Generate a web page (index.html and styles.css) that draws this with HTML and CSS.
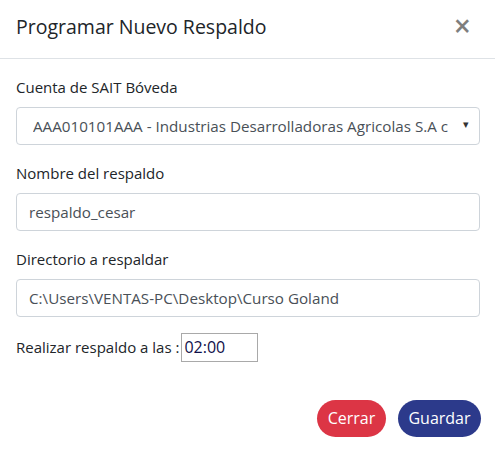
FILE: index.html
```html
<!DOCTYPE html>
<html lang="es">
<head>
<meta charset="utf-8">
<link rel="stylesheet" href="styles.css">
</head>
<body>
<div class="modal">
  <div class="modal-header">
    <h5 class="modal-title">Programar Nuevo Respaldo</h5>
    <span class="close">&times;</span>
  </div>
  <div class="modal-body">
    <div class="form-group">
      <label class="label">Cuenta de SAIT Bóveda</label>
      <div class="select">
        <span class="select-text">AAA010101AAA - Industrias Desarrolladoras Agricolas S.A c</span>
        <span class="caret">&#9662;</span>
      </div>
    </div>
    <div class="form-group">
      <label class="label">Nombre del respaldo</label>
      <div class="control">respaldo_cesar</div>
    </div>
    <div class="form-group">
      <label class="label">Directorio a respaldar</label>
      <div class="control">C:\Users\VENTAS-PC\Desktop\Curso Goland</div>
    </div>
    <div class="time-row">
      <span class="label-inline">Realizar respaldo a las :</span><span class="time">02:00</span>
    </div>
  </div>
  <div class="modal-footer">
    <button class="btn btn-red">Cerrar</button>
    <button class="btn btn-blue">Guardar</button>
  </div>
</div>
</body>
</html>
```
FILE: styles.css
```css
* { box-sizing: border-box; }
html, body { margin: 0; padding: 0; background: #fff; }
body {
  font-family: "Open Sans", "Noto Sans", sans-serif;
  color: #212529;
  font-size: 16px;
  line-height: 1.5;
  width: 495px;
  height: 450px;
  overflow: hidden;
}
.modal { width: 495px; }
.modal-header {
  display: flex;
  justify-content: space-between;
  align-items: center;
  padding: 12px 16px 17px 16px;
  border-bottom: 1px solid #dee2e6;
  height: 59px;
}
.modal-title {
  margin: 0;
  font-size: 19.5px;
  font-weight: 500;
  line-height: 1.2;
  color: #212529;
}
.close {
  font-size: 30px;
  font-weight: 600;
  color: #000;
  opacity: .5;
  line-height: 1;
  margin-right: 8px;
  margin-top: -2px;
}
.modal-body { padding: 16px 15px 16px 16px; }
.form-group { margin-bottom: 16px; }
.label {
  display: block;
  margin-bottom: 8px;
  font-size: 15px;
  line-height: 24px;
}
.select, .control {
  height: 38px;
  border: 1px solid #ced4da;
  border-radius: 4px;
  color: #495057;
  font-size: 15.2px;
  line-height: 36px;
  white-space: nowrap;
  overflow: hidden;
}
.control { padding: 0 12px; }
.select {
  display: flex;
  align-items: center;
  padding: 0 10px 0 16px;
}
.select-text {
  flex: 1;
  overflow: hidden;
  white-space: nowrap;
  margin-right: 14px;
}
.caret { font-size: 11px; color: #333; line-height: 1; margin-top: -6px; }
.time-row {
  display: flex;
  align-items: center;
  font-size: 15px;
  height: 29px;
}
.time {
  display: inline-block;
  width: 77px;
  height: 29px;
  border: 1px solid #a9a9a9;
  color: #10104a;
  padding: 0 2px;
  line-height: 27px;
  margin-left: 2px;
  font-size: 16px;
}
.modal-footer {
  display: flex;
  justify-content: flex-end;
  gap: 12px;
  padding: 22px 14px 0 0;
}
.btn {
  font-family: inherit;
  font-size: 16px;
  color: #fff;
  border: none;
  border-radius: 19px;
  height: 37px;
  padding: 0;
  line-height: 37px;
}
.btn-red { background: #dc3545; width: 69px; }
.btn-blue { background: #2c3a8b; width: 83px; }
```
